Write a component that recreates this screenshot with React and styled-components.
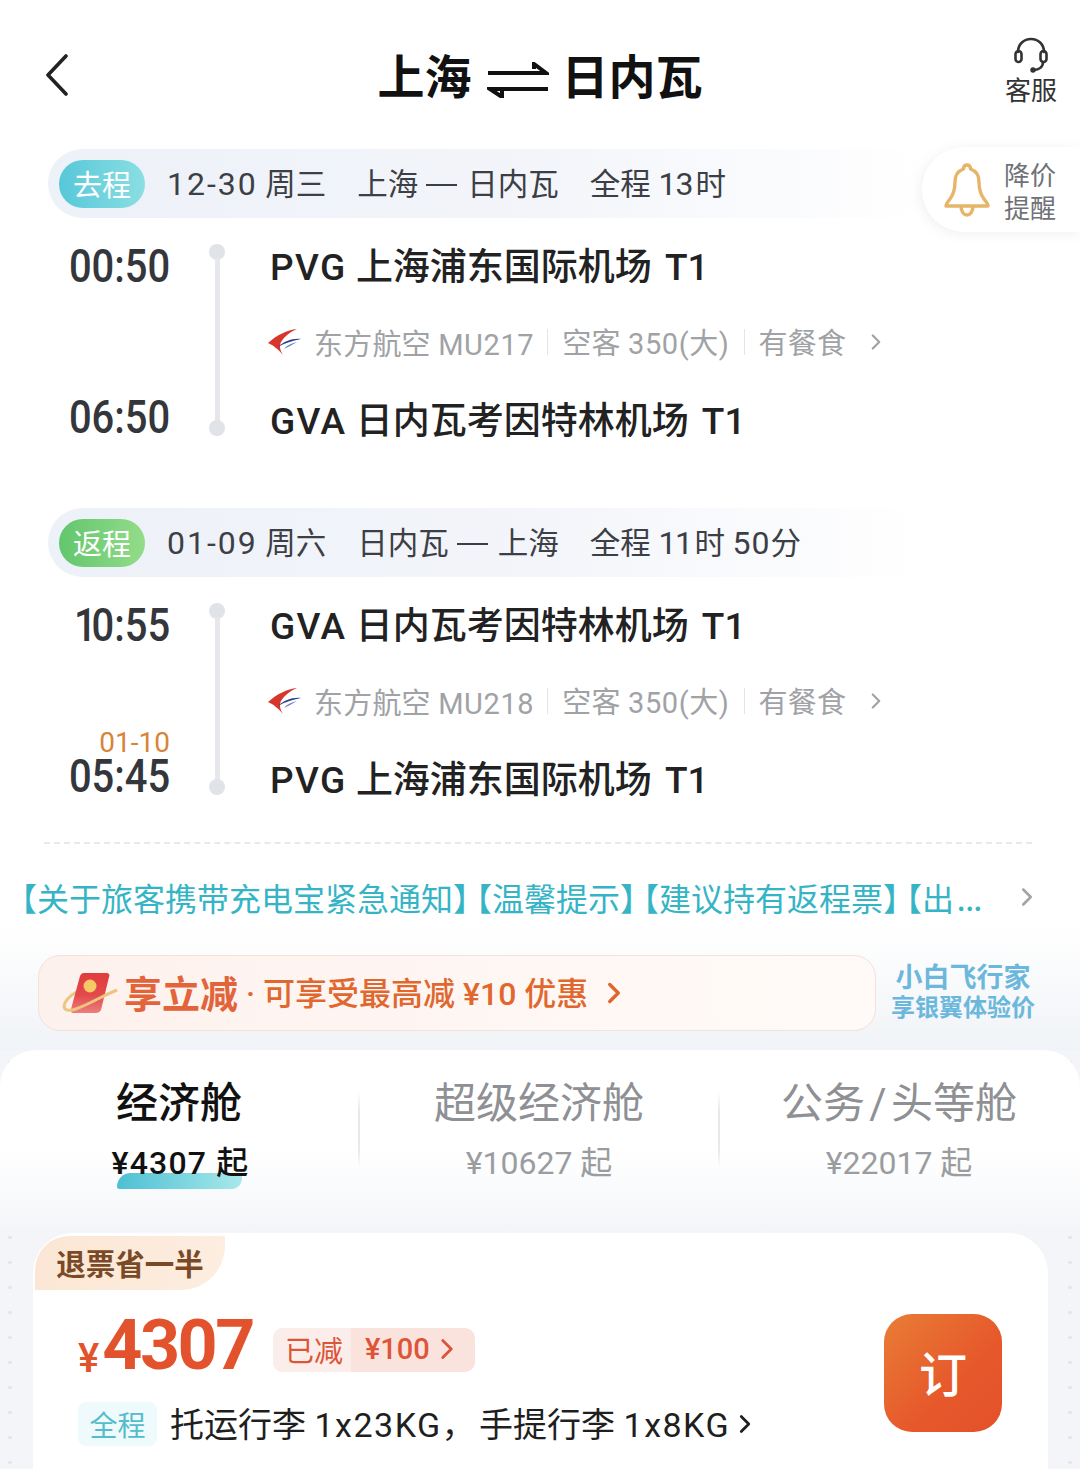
import React from 'react'
import styled, { createGlobalStyle } from 'styled-components'
import { ChevronRight } from 'lucide-react'

const GlobalStyle = createGlobalStyle`
  html, body { margin: 0; padding: 0; background: #fff; }
  * { box-sizing: border-box; }
  body { font-family: Roboto, "Noto Sans CJK SC", sans-serif; color: #222; }
`

const Page = styled.div`
  position: relative;
  width: 1080px;
  height: 1469px;
  overflow: hidden;
  background: #fff;
`

const Header = styled.header`
  display: grid;
  grid-template-columns: 1fr auto 1fr;
  align-items: center;
  height: 149px;
  padding: 6px 23px 0;
`

const BackBtn = styled.div`
  display: flex;
  align-items: center;
  margin: -6px 0 0 22px;
`

const Title = styled.h1`
  display: flex;
  align-items: center;
  margin: 0;
  font-size: 47px;
  line-height: 60px;
  font-weight: 700;
  color: #111;
`

const Service = styled.div`
  justify-self: end;
  display: flex;
  flex-direction: column;
  align-items: center;
  gap: 2px;
  font-size: 26px;
  line-height: 32px;
  color: #333;
  margin-top: -12px;
`

const Leg = styled.section`
  padding-bottom: ${(p) => p.$bottom}px;
`

const TripBar = styled.div`
  display: flex;
  align-items: center;
  width: 880px;
  height: 69px;
  margin-left: 48px;
  padding-left: 11px;
  border-radius: 35px;
  font-size: 30.5px;
  color: #3c3f45;
  background: linear-gradient(90deg, #edf1f8 0%, #f3f5fa 55%, #fff 100%);
`

const TripTag = styled.span`
  display: flex;
  align-items: center;
  justify-content: center;
  width: 86px;
  height: 48px;
  margin-right: 22px;
  padding-bottom: 2px;
  border-radius: 24px;
  font-size: 29px;
  color: #fff;
  background: ${(p) => p.$bg};
`

const TripPart = styled.span`
  margin: -3px 31px 0 0;
  white-space: pre;
`

const Num = styled.span`
  letter-spacing: ${(p) => p.$ls}px;
  font-size: ${(p) => (p.$size ? `${p.$size}px` : 'inherit')};
`

const Dash = styled.span`
  display: inline-block;
  width: 31px;
  height: 2px;
  margin: 0 10px 9px 8px;
  background: #3c3f45;
`

const FlightGrid = styled.div`
  display: grid;
  grid-template-columns: 170px 94px 1fr;
  grid-template-rows: 70px 82px 74px;
  padding-top: 13px;
`

const TimeCell = styled.div`
  position: relative;
  grid-column: 1;
  grid-row: ${(p) => p.$row};
  display: flex;
  align-items: center;
  justify-content: flex-end;
`

const Time = styled.span`
  font-size: 47px;
  line-height: 40px;
  font-weight: 500;
  color: #33363b;
  white-space: pre;
  transform: scaleX(0.85);
  transform-origin: right center;
  margin-top: ${(p) => p.$shift || 0}px;
`

const NextDay = styled.span`
  position: absolute;
  right: 0;
  top: -8px;
  font-size: 28px;
  line-height: 18px;
  color: #d8843a;
`

const Rail = styled.div`
  grid-column: 2;
  grid-row: 1 / 4;
  display: flex;
  flex-direction: column;
  align-items: center;
  padding: 13px 0 21px;
`

const RailDot = styled.span`
  width: 16px;
  height: 16px;
  flex: none;
  border-radius: 50%;
  background: #e0e3e8;
`

const RailLine = styled.span`
  flex: 1;
  width: 5px;
  margin: -2px 0;
  background: #e5e7eb;
`

const Airport = styled.div`
  grid-column: 3;
  grid-row: ${(p) => p.$row};
  align-self: center;
  padding: 0 0 4px 6px;
  font-size: 37px;
  font-weight: 500;
  color: #222;
  white-space: pre;
`

const Terminal = styled.span`
  margin-left: 4px;
`

const FlightInfo = styled.div`
  grid-column: 3;
  grid-row: 2;
  display: flex;
  align-items: center;
  padding-left: 4px;
  font-size: 29px;
  letter-spacing: 0.2px;
  color: #a0a2a6;
  white-space: pre;
`

const Carrier = styled.span`
  display: flex;
  align-items: center;
`

const CarrierName = styled.span`
  display: inline-block;
`

const InfoPart = styled.span`
  height: 26px;
  line-height: 30px;
  padding: 0 14px;
  border-left: 1px solid #e4e5e8;
  margin-left: ${(p) => p.$gap || 0}px;
`

const AlertCard = styled.div`
  position: absolute;
  top: 147px;
  right: 0;
  display: flex;
  align-items: center;
  width: 158px;
  height: 85px;
  padding-left: 22px;
  border-radius: 42px 0 0 42px;
  background: #fff;
  box-shadow: -2px 2px 12px rgba(120, 130, 150, 0.12);
`

const AlertText = styled.span`
  margin: 6px 0 0 14px;
  width: 54px;
  font-size: 26px;
  line-height: 33px;
  color: #6f7276;
`

const Divider = styled.div`
  margin: 0 48px 0 44px;
  border-top: 2px dashed #e8e9ec;
`

const NoticeBand = styled.div`
  background: linear-gradient(180deg, #fff 0%, #fff 40%, #f0f3f7 100%);
`

const Notice = styled.div`
  display: flex;
  align-items: center;
  justify-content: space-between;
  height: 106px;
  padding: 0 38px 0 21px;
  color: #a0a3a8;
`

const NoticeText = styled.div`
  display: flex;
  align-items: baseline;
  white-space: nowrap;
  font-size: 32px;
  font-feature-settings: "halt";
  color: #35b4c6;
`

const NoticeItem = styled.span`
  margin-right: 7px;
`

const NoticeMore = styled.span`
  margin-left: 2px;
  font-size: 40px;
  line-height: 32px;
`

const PromoBand = styled.div`
  display: flex;
  align-items: center;
  height: 100px;
  padding: 5px 44px 20px 38px;
`

const Promo = styled.div`
  display: flex;
  align-items: center;
  width: 838px;
  height: 76px;
  padding-left: 22px;
  border: 1.5px solid #f6e0d8;
  border-radius: 22px;
  background: linear-gradient(90deg, #fdf1ed 0%, #fff8f5 70%, #fffaf8 100%);
  color: #e0652f;
`

const PromoBig = styled.span`
  margin: -3px 0 0 5px;
  font-size: 38px;
  font-weight: 700;
  color: #e2643a;
`

const PromoSmall = styled.span`
  margin: -3px 9px 0 8px;
  font-size: 32px;
  font-weight: 500;
  color: #e0682f;
`

const SideLink = styled.div`
  flex: 1;
  margin-left: 14px;
  text-align: center;
  font-weight: 700;
  font-size: 26px;
  line-height: 30px;
  color: #6cb8dc;
  white-space: nowrap;
`

const SideLine = styled.div`
  font-size: ${(p) => p.$size}px;
`

const Lower = styled.div`
  position: relative;
  height: 419px;
  background-color: #f3f5f8;
  background-image:
    radial-gradient(circle, #e3e5e9 1.5px, transparent 2px),
    radial-gradient(circle, #e3e5e9 1.5px, transparent 2px);
  background-size: 20px 25px, 20px 25px;
  background-position: 0 175px, 1060px 175px;
  background-repeat: repeat-y, repeat-y;
`

const Tabs = styled.div`
  display: grid;
  grid-template-columns: repeat(3, 1fr);
  height: 183px;
  padding-top: 28px;
  border-radius: 36px 36px 0 0;
  background: linear-gradient(180deg, #fff 0%, #fff 55%, #f3f5f8 100%);
`

const Tab = styled.div`
  display: flex;
  flex-direction: column;
  align-items: center;
  height: 105px;
  margin-left: -2px;
  background-image: ${(p) =>
    p.$first ? 'none' : 'linear-gradient(180deg, transparent, #e6e8ec 25%, #e6e8ec 75%, transparent)'};
  background-size: 2px 76px;
  background-position: 0 14px;
  background-repeat: no-repeat;
`

const TabName = styled.div`
  font-size: 42px;
  line-height: 52px;
  font-weight: ${(p) => (p.$active ? 500 : 400)};
  color: ${(p) => (p.$active ? '#111' : '#8e9094')};
  white-space: pre;
`

const TabPrice = styled.div`
  position: relative;
  isolation: isolate;
  margin: 8px 0 0 ${(p) => (p.$active ? 3 : 0)}px;
  font-size: 32px;
  line-height: 50px;
  font-weight: ${(p) => (p.$active ? 500 : 400)};
  letter-spacing: ${(p) => (p.$active ? 1.2 : 0)}px;
  color: ${(p) => (p.$active ? '#111' : '#9a9ca0')};
  white-space: pre;
`

const TabMark = styled.span`
  position: absolute;
  z-index: -1;
  left: 6px;
  bottom: -1px;
  width: 125px;
  height: 16px;
  border-radius: 18px 3px 14px 3px;
  background: linear-gradient(90deg, #4dc0d4, #a8e8ea);
`

const Card = styled.div`
  position: relative;
  margin: 0 32px 0 33px;
  height: 240px;
  padding: 3px 2px 0;
  border-radius: 40px 40px 0 0;
  background: #fff;
`

const CardTag = styled.div`
  display: flex;
  align-items: center;
  justify-content: center;
  width: 190px;
  height: 54px;
  padding-bottom: 2px;
  border-radius: 34px 0 44px 0;
  background: linear-gradient(100deg, #fbe6d4 0%, #fdeee0 100%);
  font-size: 29.5px;
  font-weight: 700;
  color: #7a4a26;
`

const Fare = styled.div`
  display: flex;
  justify-content: space-between;
  padding: 24px 44px 0 43px;
`

const FareMain = styled.div`
  display: flex;
  flex-direction: column;
`

const PriceRow = styled.div`
  display: flex;
  align-items: center;
  height: 66px;
`

const Yen = styled.span`
  align-self: flex-end;
  margin-right: 3px;
  margin-bottom: -2px;
  font-size: 40px;
  line-height: 46px;
  font-weight: 500;
  color: #e2532d;
`

const Amount = styled.span`
  margin-top: -4px;
  font-size: 70px;
  line-height: 66px;
  font-weight: 700;
  letter-spacing: -2.5px;
  color: #e2532d;
`

const Saved = styled.div`
  display: flex;
  align-items: center;
  height: 44px;
  margin: 6px 0 0 20px;
  border-radius: 10px;
  overflow: hidden;
  font-size: 29px;
  color: #dd5538;
  background: #fbe3dd;
`

const SavedLabel = styled.span`
  display: flex;
  align-items: center;
  height: 100%;
  padding: 0 8px 3px 12px;
  background: #fbeeea;
`

const SavedValue = styled.span`
  display: flex;
  align-items: center;
  padding: 0 11px 3px 14px;
  font-weight: 500;
`

const Baggage = styled.div`
  display: flex;
  align-items: center;
  margin-top: 21px;
  font-size: 34px;
  color: #1f1f1f;
`

const BaggageText = styled.span`
  margin-top: -3px;
  white-space: pre;
`

const BaggageTag = styled.span`
  display: flex;
  align-items: center;
  justify-content: center;
  width: 79px;
  height: 44px;
  margin-right: 13px;
  border-radius: 8px;
  font-size: 28px;
  color: #55bccb;
  background: #eefafb;
`

const BookBtn = styled.div`
  display: flex;
  align-items: center;
  justify-content: center;
  width: 118px;
  height: 118px;
  padding-bottom: 4px;
  border-radius: 28px;
  font-size: 48px;
  font-weight: 500;
  color: #fff;
  background: linear-gradient(135deg, #e97d36 0%, #e6582b 60%, #e4512a 100%);
`

const BackIcon = () => (
  <svg width="24" height="42" viewBox="0 0 24 42" fill="none" stroke="#222" strokeWidth="3.6" strokeLinecap="round" strokeLinejoin="round">
    <path d="M21 2L3 21l18 19" />
  </svg>
)

const SwapArrows = () => (
  <svg width="62" height="36" viewBox="0 0 62 36" style={{ margin: '4px 13px 0 15px' }}>
    <path d="M1 11h58L47 2v5" fill="none" stroke="#111" strokeWidth="4" />
    <path d="M61 27H3l12 8v-6" fill="none" stroke="#111" strokeWidth="4" />
  </svg>
)

const HeadsetIcon = () => (
  <svg width="36" height="36" viewBox="0 0 36 36" fill="none" stroke="#333" strokeWidth="2.6" strokeLinecap="round">
    <path d="M5 15C5 7 11 2 18 2s13 5 13 13" />
    <rect x="2.5" y="14" width="6" height="11" rx="3" />
    <rect x="27.5" y="14" width="6" height="11" rx="3" />
    <path d="M30 25c0 5-4 8-9 8" />
    <circle cx="20" cy="33" r="1.4" fill="#333" />
  </svg>
)

const BellIcon = () => (
  <svg width="46" height="54" viewBox="0 0 46 54" fill="none" stroke="#e6b568" strokeWidth="3.4" strokeLinejoin="round">
    <path d="M23 2c-2 0-3.500 1.500-3.500 4-6 2-8.500 7-8.500 13 0 8-2 13-5 17-2 2.500-4 5-4 7h42c0-2-2-4.500-4-7-3-4-5-9-5-17 0-6-2.500-11-8.500-13 0-2.500-1.500-4-3.500-4z" />
    <path d="M17 43c0 6 3 9 6 9s6-3 6-9" />
  </svg>
)

const AirlineLogo = () => (
  <svg width="33" height="28" viewBox="0 0 33 28" style={{ marginRight: 13 }}>
    <path d="M29 1C19 2 9 7 0 15c5 2 11 7 15 12-3-5-4-9-2-13C16 9 22 4 29 1z" fill="#d8352c" />
    <path d="M33 11C25 10 16 13 10 19c7-4 14-6 23-8z" fill="#2b3f8f" />
    <path d="M29 14c-5 1-10 3-13 7 4-2 8-4 13-7z" fill="#7583bb" />
  </svg>
)

const RedPacket = () => (
  <svg width="58" height="46" viewBox="0 0 58 46">
    <defs>
      <linearGradient id="packet" x1="0" y1="0" x2="0" y2="1">
        <stop offset="0" stopColor="#e03c3e" />
        <stop offset="0.55" stopColor="#e3494b" />
        <stop offset="1" stopColor="#ea7f80" />
      </linearGradient>
    </defs>
    <path d="M3 36c1-6 7-11 14-15" fill="none" stroke="#ecc67e" strokeWidth="3" />
    <path d="M19 6c1-2 2-3 4-3h22c3 0 4 2 3 4l-8 33c-1 2-3 3-5 3H13c-3 0-4-2-3-4z" fill="url(#packet)" />
    <circle cx="29" cy="16" r="6.500" fill="#f6c866" />
    <path d="M3 36c0 5 6 5 12 3 14-5 28-14 41-19" fill="none" stroke="#ecc67e" strokeWidth="3" />
  </svg>
)

const legs = [
  {
    tag: '去程',
    tagBg: 'linear-gradient(90deg, #57c7d9, #8adfe2)',
    date: '12-30',
    day: ' 周三',
    from: '上海',
    to: '日内瓦',
    total: <>全程 <Num $ls={-1} $size={32}>13</Num>{'\u200a'}时</>,
    depart: '00:50',
    arrive: '06:50',
    origin: ['PVG', '上海浦东国际机场'],
    dest: ['GVA', '日内瓦考因特林机场'],
    flight: 'MU217',
    bottom: 51,
  },
  {
    tag: '返程',
    tagBg: 'linear-gradient(90deg, #62c66c, #93dc8a)',
    date: '01-09',
    day: ' 周六',
    from: '日内瓦',
    to: '上海',
    total: <>全程 <Num $ls={-1.5} $size={32}>11</Num>{'\u200a'}时 <Num $ls={1} $size={32}>50</Num>分</>,
    depart: <><Num $ls={-6}>1</Num>0:55</>,
    arrive: '05:45',
    nextDay: '01-10',
    origin: ['GVA', '日内瓦考因特林机场'],
    dest: ['PVG', '上海浦东国际机场'],
    flight: 'MU218',
    bottom: 26,
  },
]

const cabins = [
  { name: '经济舱', price: '¥4307 起', active: true },
  { name: '超级经济舱', price: '¥10627 起' },
  { name: '公务\u200a/\u200a头等舱', price: '¥22017 起' },
]

const noticeItems = ['【关于旅客携带充电宝紧急通知】', '【温馨提示】', '【建议持有返程票】']

const App = () => {
  return (
    <Page>
      <GlobalStyle />
      <Header>
        <BackBtn>
          <BackIcon />
        </BackBtn>
        <Title>
          上海
          <SwapArrows />
          日内瓦
        </Title>
        <Service>
          <HeadsetIcon />
          <span>客服</span>
        </Service>
      </Header>

      {legs.map((leg) => (
        <Leg key={leg.tag} $bottom={leg.bottom}>
          <TripBar>
            <TripTag $bg={leg.tagBg}>{leg.tag}</TripTag>
            <TripPart>
              <Num $ls={2} $size={32}>{leg.date}</Num>
              {leg.day}
            </TripPart>
            <TripPart>
              {leg.from}
              <Dash />
              {leg.to}
            </TripPart>
            <TripPart>{leg.total}</TripPart>
          </TripBar>
          <FlightGrid>
            <TimeCell $row={1}>
              <Time>{leg.depart}</Time>
            </TimeCell>
            <Rail>
              <RailDot />
              <RailLine />
              <RailDot />
            </Rail>
            <Airport $row={1}>
              <Num $ls={1.4}>{leg.origin[0]}</Num> {leg.origin[1]}
              <Terminal> T1</Terminal>
            </Airport>
            <FlightInfo>
              <Carrier>
                <AirlineLogo />
                <CarrierName>
                  东方航空 <Num $ls={0.6}>{leg.flight}</Num>
                </CarrierName>
              </Carrier>
              <InfoPart $gap={13}>
                空客 <Num $ls={0.6}>350(大)</Num>
              </InfoPart>
              <InfoPart>有餐食</InfoPart>
              <ChevronRight size={26} strokeWidth={2} style={{ marginLeft: 3 }} />
            </FlightInfo>
            <TimeCell $row={3}>
              {leg.nextDay && <NextDay>{leg.nextDay}</NextDay>}
              <Time $shift={-7}>{leg.arrive}</Time>
            </TimeCell>
            <Airport $row={3}>
              <Num $ls={1.4}>{leg.dest[0]}</Num> {leg.dest[1]}
              <Terminal> T1</Terminal>
            </Airport>
          </FlightGrid>
        </Leg>
      ))}

      <AlertCard>
        <BellIcon />
        <AlertText>降价提醒</AlertText>
      </AlertCard>

      <Divider />
      <NoticeBand>
        <Notice>
          <NoticeText>
            {noticeItems.map((item) => (
              <NoticeItem key={item}>{item}</NoticeItem>
            ))}
            【出
            <NoticeMore>…</NoticeMore>
          </NoticeText>
          <ChevronRight size={30} strokeWidth={2} />
        </Notice>

        <PromoBand>
          <Promo>
            <RedPacket />
            <PromoBig>享立减</PromoBig>
            <PromoSmall>· 可享受最高减 ¥10 优惠</PromoSmall>
            <ChevronRight size={34} strokeWidth={2.4} />
          </Promo>
          <SideLink>
            <SideLine $size={27}>小白飞行家</SideLine>
            <SideLine $size={24}>享银翼体验价</SideLine>
          </SideLink>
        </PromoBand>
      </NoticeBand>

      <Lower>
        <Tabs>
          {cabins.map((cabin, index) => (
            <Tab key={cabin.name} $first={index === 0}>
              <TabName $active={cabin.active}>{cabin.name}</TabName>
              <TabPrice $active={cabin.active}>
                {cabin.price}
                {cabin.active && <TabMark />}
              </TabPrice>
            </Tab>
          ))}
        </Tabs>
        <Card>
          <CardTag>退票省一半</CardTag>
          <Fare>
            <FareMain>
              <PriceRow>
                <Yen>¥</Yen>
                <Amount>4307</Amount>
                <Saved>
                  <SavedLabel>已减</SavedLabel>
                  <SavedValue>
                    ¥100
                    <ChevronRight size={34} strokeWidth={2} />
                  </SavedValue>
                </Saved>
              </PriceRow>
              <Baggage>
                <BaggageTag>全程</BaggageTag>
                <BaggageText>
                  托运行李 <Num $ls={1.5}>1x23KG</Num>，{'\u200a'}手提行李 <Num $ls={1.5}>1x8KG</Num>
                </BaggageText>
                <ChevronRight size={30} strokeWidth={2.2} />
              </Baggage>
            </FareMain>
            <BookBtn>订</BookBtn>
          </Fare>
        </Card>
      </Lower>
    </Page>
  )
}

export default App
